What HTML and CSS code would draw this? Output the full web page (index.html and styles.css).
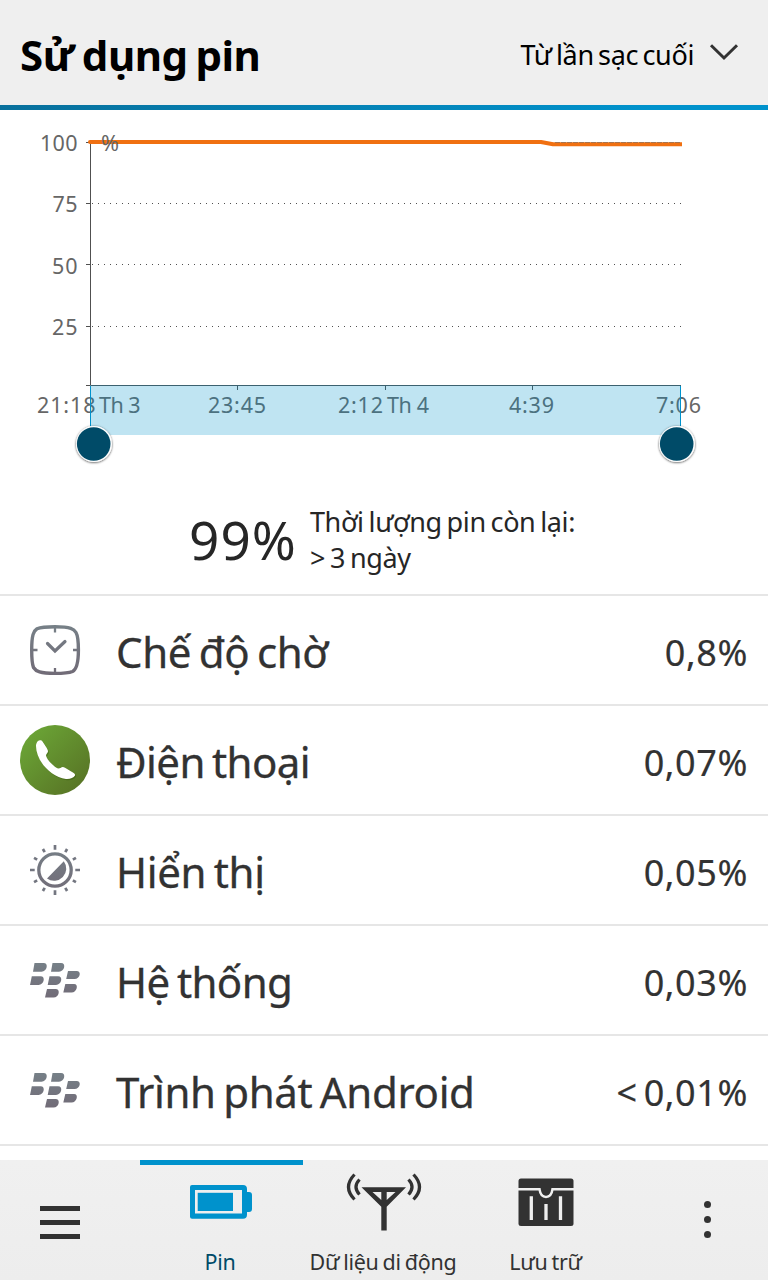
FILE: index.html
```
<!DOCTYPE html>
<html lang="vi">
<head>
<meta charset="utf-8">
<title>Sử dụng pin</title>
<link rel="stylesheet" href="styles.css">
</head>
<body>
<div class="screen">
  <header class="header">
    <h1 class="title">Sử dụng pin</h1>
    <div class="range"><span class="range-label">Từ lần sạc cuối</span>
      <svg class="chevron" width="30" height="18" viewBox="0 0 30 18"><path d="M2 2.200 15 15 28 2.200" fill="none" stroke="#323232" stroke-width="3"/></svg>
    </div>
  </header>

  <svg class="chart" width="768" height="380" viewBox="0 110 768 380">
    <defs><filter id="shadow" x="-20%" y="-20%" width="140%" height="140%"><feDropShadow dx="0" dy="0.600" stdDeviation="0.900" flood-color="#000" flood-opacity=".7"/></filter></defs>
    <g class="axis-text">
      <text x="40" y="151" textLength="37.500">100</text>
      <text x="52.500" y="212" textLength="25">75</text>
      <text x="52" y="274" textLength="25.500">50</text>
      <text x="52" y="335" textLength="25.500">25</text>
      <text x="37" y="413" textLength="58.500">21:18</text>
      <text x="99" y="413" textLength="41.500">Th 3</text>
      <text x="208" y="413" textLength="58">23:45</text>
      <text x="338" y="413" textLength="45">2:12</text>
      <text x="387" y="413" textLength="42">Th 4</text>
      <text x="509" y="413" textLength="45">4:39</text>
      <text x="656" y="413" textLength="45">7:06</text>
    </g>
    <path d="M90.500 142V385.500H681M86 142.500h4M86 203.500h4M86 264.500h4M86 326.500h4M86 385.500h4M237.500 386v4M385.500 386v4M532.500 386v4" fill="none" stroke="#505050"/>
    <path d="M92 203.500H682M92 264.500H682M92 326.500H682" stroke="#505050" stroke-dasharray="1 5"/>
    <circle cx="90" cy="142" r="2" fill="#f07011"/>
    <path d="M90 142H541L553 144.300H682" fill="none" stroke="#f07011" stroke-width="4" stroke-linejoin="round"/>
    <path d="M555 142.500H681" stroke="#505050" stroke-dasharray="5 1" opacity=".45"/>
    <text class="unit" x="101" y="151" textLength="18" lengthAdjust="spacingAndGlyphs">%</text>
    <rect x="90" y="385" width="591" height="50" fill="#0092cc" fill-opacity=".25"/>
    <path d="M90.500 386v40M680.500 386v40" stroke="#0092cc"/>
    <g filter="url(#shadow)"><circle cx="94" cy="444" r="18" fill="#fff"/><circle cx="677" cy="444" r="18" fill="#fff"/></g>
    <circle cx="93.700" cy="444" r="16.800" fill="#004b68"/><circle cx="676.700" cy="444" r="16.800" fill="#004b68"/>
  </svg>

  <section class="summary">
    <div class="percent">99%</div>
    <div class="remaining"><div>Thời lượng pin còn lại:</div><div>&gt; 3 ngày</div></div>
  </section>

  <svg class="defs" width="0" height="0">
    <defs>
      <linearGradient id="gray" gradientUnits="userSpaceOnUse" x1="0" y1="10" x2="0" y2="60"><stop offset="0" stop-color="#768087"/><stop offset="1" stop-color="#716b77"/></linearGradient>
      <linearGradient id="grayLogo" gradientUnits="userSpaceOnUse" x1="0" y1="18" x2="0" y2="53"><stop offset="0" stop-color="#768087"/><stop offset="1" stop-color="#716b77"/></linearGradient>
      <linearGradient id="green" x1=".1" y1=".1" x2=".9" y2=".9"><stop offset="0" stop-color="#6ba536"/><stop offset="1" stop-color="#587425"/></linearGradient>
      <g id="berries" fill="url(#grayLogo)">
        <path d="M14.500 18H23.500C29 18 27 26.700 21.500 26.700H13ZM32.500 18H41C46.500 18 44.500 26.700 39 26.700H31ZM48 26H56.500C62 26 60 34 54.500 34H46.200ZM11.800 31.300H20.500C26 31.300 24 40 18.500 40H10ZM29.500 31.300H38C43.500 31.300 41.500 40 36 40H27.700ZM45.300 39H54C59 39 57 47.500 51.500 47.500H43.300ZM27 44H35.500C41 44 39 52.600 33.500 52.600H25Z"/>
      </g>
      <path id="handset" d="M20 15.200C18 15 16 18 16 21 16 35 30 52 46 54 50 54.300 53.500 53 55 50.500 55.300 49.500 54.700 48.700 53.700 48L45 42.800C43 41.500 42 42 40.500 43 38 44 36 43 33 40 29 36.500 26.500 33 26 30.500 26 29 27.800 28 28 26.500 28 23.500 24.500 20 22.500 16.500 22 15.600 21 15.100 20 15.200Z"/>
    </defs>
  </svg>

  <ul class="list">
    <li class="row">
      <svg class="icon" viewBox="0 0 70 70"><g fill="none" stroke="url(#gray)"><path d="M35 11.700C51 11.700 54 14 56 17.500 58 21 58.400 27 58.400 35 58.400 50 55.500 55 52.500 56.500 48 58.300 42 58.400 35 58.400 20 58.400 16 56.500 13.500 52.500 11.700 48 11.700 42 11.700 35 11.700 20 13.500 16 17 13.800 22 11.700 28 11.700 35 11.700Z" stroke-width="3.400"/><path d="M35 13v4.500M35 53v4M13 35h4.500M53 35h4" stroke-width="2.300"/><path d="M27.500 28.500 35 36 45 26.500" stroke-width="3.200" stroke-linecap="round"/></g></svg>
      <span class="name">Chế độ chờ</span><span class="value">0,8%</span>
    </li>
    <li class="row">
      <svg class="icon" viewBox="0 0 70 70"><circle cx="35" cy="35" r="35" fill="url(#green)"/><use href="#handset" transform="translate(1 1.200)" fill="#244500" opacity=".3"/><use href="#handset" fill="#fff"/></svg>
      <span class="name tight">Điện thoại</span><span class="value">0,07%</span>
    </li>
    <li class="row">
      <svg class="icon" viewBox="0 0 70 70"><circle cx="35" cy="35" r="16.200" fill="none" stroke="url(#gray)" stroke-width="3.300"/><path d="M43.800 26.200A12.200 12.200 0 0 1 27 43.500Z" fill="url(#gray)"/><g stroke="#737680" stroke-width="2.700"><path d="M35 10v4.700M35 55.300V60M10 35h4.700M55.300 35H60M22.900 14.040l1.800 3.120M45.300 52.840l1.800 3.120M14.040 22.900l3.120 1.800M52.840 45.300l3.120 1.800M22.900 55.960l1.800-3.120M45.300 17.160l1.800-3.120M14.040 47.100l3.120-1.800M52.840 24.700l3.120-1.800"/></g></svg>
      <span class="name">Hiển thị</span><span class="value">0,05%</span>
    </li>
    <li class="row">
      <svg class="icon" viewBox="0 0 70 70"><use href="#berries"/></svg>
      <span class="name tight">Hệ thống</span><span class="value">0,03%</span>
    </li>
    <li class="row">
      <svg class="icon" viewBox="0 0 70 70"><use href="#berries"/></svg>
      <span class="name">Trình phát Android</span><span class="value">&lt; 0,01%</span>
    </li>
  </ul>

  <footer class="tabs">
    <div class="menu"><i class="bar"></i><i class="bar"></i><i class="bar"></i></div>
    <div class="tab active">
      <svg class="tab-icon" width="80" height="60" viewBox="0 0 80 60"><path d="M12 15h51q4 0 4 4v3h2q3 0 3 3v14q0 3-3 3h-2v2.700q0 4-4 4H12q-2 0-2-2V17q0-2 2-2ZM15 20v23.500H62V20Z" fill="#0092cc" fill-rule="evenodd"/><rect x="17.700" y="22.800" width="35.300" height="18.200" fill="#0092cc"/></svg>
      <span class="tab-label">Pin</span>
    </div>
    <div class="tab">
      <svg class="tab-icon" width="80" height="60" viewBox="0 0 80 60"><path d="M18.500 17.200H63L43.700 36.700V60.500H38.300V36.700ZM29.500 22 38.300 30V22ZM43.700 22V30L52.500 22Z" fill="#323232" fill-rule="evenodd"/><g fill="none" stroke="#323232" stroke-width="3.200"><path d="M11.500 4.500Q-.5 17 11.500 29.500M16.500 9.500Q9.500 17 16.500 24.500M70.500 4.500Q82.500 17 70.500 29.500M65.500 9.500Q72.500 17 65.500 24.500"/></g></svg>
      <span class="tab-label">Dữ liệu di động</span>
    </div>
    <div class="tab last">
      <svg class="tab-icon" width="80" height="60" viewBox="0 0 80 60"><rect x="12.500" y="8.500" width="55" height="47.500" rx="2.500" fill="#323232"/><path d="M12 19.200H33.500Q34.500 27 40 27T46.500 19.200H68" fill="none" stroke="#efefef" stroke-width="2.500"/><path d="M37 17.500h6v6.500q-3 2.500-6 0Z" fill="#323232"/><path d="M25.300 26.300V50M40 34V50M54.500 26.300V50" fill="none" stroke="#efefef" stroke-width="3.300"/></svg>
      <span class="tab-label">Lưu trữ</span>
    </div>
    <div class="more"><i class="dot"></i><i class="dot"></i><i class="dot"></i></div>
  </footer>
</div>
</body>
</html>
```
FILE: styles.css
```
* { box-sizing: border-box; }
body { margin: 0; background: #fff; font-family: "Noto Sans", sans-serif; }
.screen { width: 768px; height: 1280px; display: flex; flex-direction: column; overflow: hidden; background: #fff; }
.header { height: 110px; flex: none; display: flex; justify-content: space-between; align-items: center; padding: 0 29px 0 20px; background: #efefef; border-bottom: 5px solid; border-image: linear-gradient(90deg, #08709c, #0092cc 85%) 1; }
.title { margin: 0; font-size: 42px; font-weight: 700; line-height: 60px; color: #000; padding-top: 4px; white-space: nowrap; letter-spacing: -.5px; word-spacing: -2.500px; }
.range { display: flex; align-items: center; gap: 14px; font-size: 27px; line-height: 36px; color: #000; padding-top: 4px; white-space: nowrap; letter-spacing: -.35px; word-spacing: -2.300px; }
.range-label { margin-right: 1px; }
.chevron { margin-top: -5px; }
.chart { display: block; flex: none; }
.axis-text, .unit { font-size: 21.500px; fill: #666; }
.summary { height: 104px; flex: none; display: flex; gap: 13px; padding-left: 189px; color: #262626; white-space: nowrap; }
.percent { font-size: 53px; line-height: 99px; letter-spacing: 1.100px; }
.remaining { padding-top: 14px; font-size: 27px; line-height: 36px; letter-spacing: -.4px; word-spacing: -1.700px; }
.defs { position: absolute; }
.list { list-style: none; margin: 0; padding: 0; flex: 1; border-top: 2px solid #e6e6e6; }
.row { height: 110px; display: flex; align-items: center; padding: 0 20px; border-bottom: 2px solid #e6e6e6; color: #323232; white-space: nowrap; }
.icon { width: 70px; height: 70px; flex: none; }
.name { flex: 1; margin-left: 26px; padding-top: 4px; font-size: 42px; line-height: 60px; letter-spacing: -.35px; word-spacing: -3px; -webkit-text-stroke: .3px; }
.tight { letter-spacing: -.6px; }
.value { padding-top: 6px; font-size: 36px; line-height: 50px; letter-spacing: .6px; word-spacing: -4px; -webkit-text-stroke: .2px; }
.tabs { height: 120px; flex: none; display: flex; background: linear-gradient(#f0f0f0, #ededed); }
.menu { width: 140px; padding: 46px 0 0 40px; display: flex; flex-direction: column; gap: 9px; }
.bar { width: 40px; height: 5px; background: #323232; }
.tab { width: 163px; padding-right: 3px; display: flex; flex-direction: column; align-items: center; border-top: 5px solid transparent; color: #323232; }
.active { border-color: #0092cc; color: #004b68; }
.last { padding-right: 4px; }
.tab-icon { display: block; margin-top: 5px; flex: none; overflow: visible; }
.tab-label { margin-top: 18px; font-size: 21.500px; line-height: 28px; white-space: nowrap; letter-spacing: -.3px; word-spacing: -1.200px; }
.more { flex: 1; padding: 41px 0 0 75px; display: flex; flex-direction: column; gap: 8px; }
.dot { width: 7px; height: 7px; border-radius: 50%; background: #323232; }
```
